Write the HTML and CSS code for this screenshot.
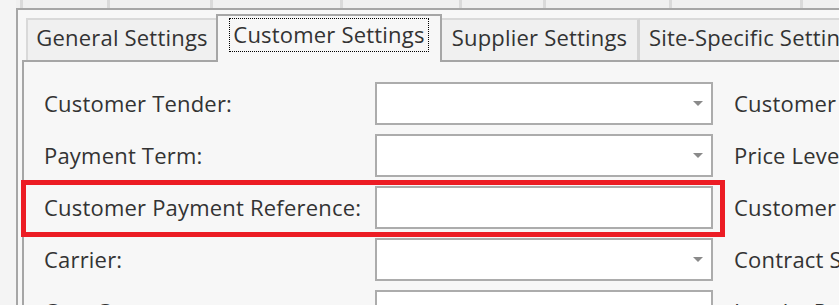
FILE: index.html
```html
<!DOCTYPE html>
<html>
<head>
<meta charset="utf-8">
<title>Customer Settings</title>
<link rel="stylesheet" href="styles.css">
</head>
<body>
<div class="topstrip">
  <div class="cell"></div><div class="cell"></div><div class="cell"></div><div class="cell"></div><div class="cell"></div><div class="cell"></div><div class="cell"></div><div class="cell"></div><div class="cell"></div>
</div>
<div class="panel">
  <div class="tabs">
    <div class="tab tab-general">General Settings</div>
    <div class="tab tab-active"><span class="focus">Customer Settings</span></div>
    <div class="tab tab-supplier">Supplier Settings</div>
    <div class="tab tab-site">Site-Specific Settings</div>
  </div>
  <div class="content">
    <div class="form">
      <div class="label">Customer Tender:</div>
      <div class="field combo"><svg class="arrow" width="10" height="5" viewBox="0 0 10 5"><polygon points="0,0 10,0 5,5"/></svg></div>
      <div class="label label-right">Customer Group:</div>

      <div class="label">Payment Term:</div>
      <div class="field combo"><svg class="arrow" width="10" height="5" viewBox="0 0 10 5"><polygon points="0,0 10,0 5,5"/></svg></div>
      <div class="label label-right">Price Level:</div>

      <div class="label">Customer Payment Reference:</div>
      <div class="field"></div>
      <div class="label label-right">Customer Type:</div>

      <div class="label">Carrier:</div>
      <div class="field combo"><svg class="arrow" width="10" height="5" viewBox="0 0 10 5"><polygon points="0,0 10,0 5,5"/></svg></div>
      <div class="label label-right">Contract Start Date:</div>

      <div class="label">Cost Center:</div>
      <div class="field"></div>
      <div class="label label-right">Loyalty Program:</div>
    </div>
    <div class="highlight"></div>
  </div>
</div>
</body>
</html>
```
FILE: styles.css
```css
html, body {
  margin: 0;
  padding: 0;
}
body {
  width: 839px;
  height: 305px;
  overflow: hidden;
  background: #f4f4f4;
  font-family: "Open Sans", "Noto Sans", sans-serif;
  font-size: 22px;
  letter-spacing: 0.2px;
  color: #333333;
}
.topstrip {
  margin-left: 16px;
  height: 8px;
  display: grid;
  grid-template-columns: 4px 84px 100px 127px 116px 81px 123px 128px 1fr;
  column-gap: 3px;
  background: #dadada;
}
.cell {
  background: #f0f0f0;
}
.panel {
  margin-left: 16px;
  width: 900px;
  height: 297px;
  border-top: 2px solid #a6a6a6;
  border-left: 2px solid #a6a6a6;
  background: #f7f7f7;
  padding: 4px 0 0 4px;
  box-sizing: border-box;
}
.tabs {
  display: flex;
  align-items: flex-start;
  height: 46px;
  padding-left: 4px;
  position: relative;
  z-index: 2;
}
.tab {
  box-sizing: border-box;
  display: flex;
  align-items: center;
  justify-content: center;
  white-space: nowrap;
  background: #f0f0f0;
  border-top: 2px solid #d9d9d9;
  margin-top: 4px;
  height: 42px;
  padding-bottom: 7px;
  flex: none;
}
.tab-general {
  width: 190px;
  border-left: 2px solid #d9d9d9;
}
.tab-active {
  width: 226px;
  height: 48px;
  margin-top: 0;
  background: #f7f7f7;
  border: 2px solid #a6a6a6;
  border-bottom: none;
  padding-bottom: 9px;
}
.focus {
  display: inline-block;
  line-height: 30px;
  padding: 0 3px 2px 3px;
  border: 1px dotted #000;
}
.tab-supplier {
  width: 198px;
  border-right: 3px solid #d4d4d4;
}
.tab-site {
  width: 260px;
  justify-content: flex-start;
  padding-left: 9px;
}
.content {
  position: relative;
  height: 260px;
  border-top: 2px solid #a6a6a6;
  border-left: 2px solid #a6a6a6;
  padding: 20px 0 0 20px;
  box-sizing: border-box;
}
.form {
  display: grid;
  grid-template-columns: 331px 338px 200px;
  grid-auto-rows: 43px;
  row-gap: 9px;
  align-items: center;
}
.label {
  white-space: nowrap;
  line-height: 43px;
}
.label-right {
  padding-left: 21px;
}
.field {
  box-sizing: border-box;
  height: 43px;
  background: #ffffff;
  border: 2px solid #acacac;
}
.combo {
  display: flex;
  align-items: center;
  justify-content: flex-end;
  padding-right: 8px;
}
.arrow {
  display: block;
  fill: #8a8a8a;
}
.highlight {
  position: absolute;
  left: -3px;
  top: 118px;
  width: 704px;
  height: 57px;
  box-sizing: border-box;
  border: 5px solid #ec1c24;
  pointer-events: none;
}
```
